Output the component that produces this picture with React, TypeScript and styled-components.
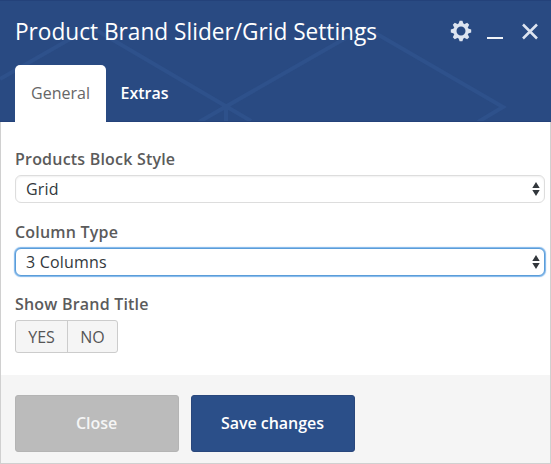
import React from "react";
import styled, { createGlobalStyle } from "styled-components";

const GlobalStyle = createGlobalStyle`
  * { box-sizing: border-box; }
  body { margin: 0; font-family: "Open Sans", sans-serif; }
  button { font-family: inherit; margin: 0; padding: 0; }
`;

const Panel = styled.section`
  width: 551px;
  height: 464px;
  display: flex;
  flex-direction: column;
  border: 1px solid #d0d0d0;
  border-top: 0;
  background: #fff;
`;

const Header = styled.header`
  position: relative;
  height: 122px;
  margin: 0 -1px;
  padding: 0 10px 0 15px;
  display: flex;
  flex-direction: column;
  justify-content: space-between;
  background: #294a82;
  border: solid #24427a;
  border-width: 1px 0 1px;
`;

const Pattern = styled.svg`
  position: absolute;
  left: 0;
  top: -1px;
`;

const TitleRow = styled.div`
  position: relative;
  height: 60px;
  display: flex;
  align-items: center;
  justify-content: space-between;
`;

const Title = styled.h1`
  margin: 0;
  font-size: 24px;
  line-height: 32px;
  font-weight: 400;
  transform: scaleX(0.943);
  transform-origin: left center;
  white-space: nowrap;
  color: #fff;
`;

const Controls = styled.div`
  display: flex;
  align-items: center;
  gap: 13px;
`;

const IconButton = styled.button`
  display: flex;
  border: 0;
  background: none;
`;

const Tabs = styled.nav`
  position: relative;
  display: flex;
  margin-bottom: -1px;
`;

const Tab = styled.button<{ $active?: boolean }>`
  height: 57px;
  width: ${(p) => (p.$active ? 91 : 77)}px;
  padding-bottom: 1px;
  border: 0;
  border-radius: 5px 5px 0 0;
  background: ${(p) => (p.$active ? "#fff" : "transparent")};
  color: ${(p) => (p.$active ? "#666" : "#fff")};
  font-size: 16px;
  line-height: 22px;
  font-weight: ${(p) => (p.$active ? 400 : 600)};
`;

const Body = styled.main`
  height: 253px;
  padding: 26px 4px 0 14px;
`;

const Field = styled.div`
  height: 72.5px;
`;

const Label = styled.div`
  height: 27px;
  font-size: 16px;
  line-height: 22px;
  font-weight: 600;
  letter-spacing: 0.2px;
  color: #5b5b5b;
`;

const Select = styled.button<{ $focused?: boolean }>`
  width: 530px;
  height: 28px;
  padding: 0 4px 0 10px;
  display: flex;
  align-items: center;
  justify-content: space-between;
  border: 1px solid ${(p) => (p.$focused ? "#5b9dd9" : "#ddd")};
  border-radius: 6px;
  background: #fff;
  box-shadow: ${(p) =>
    p.$focused ? "0 0 1px 0.5px rgba(70,150,225,.7)" : "inset 0 1px 2px rgba(0,0,0,.06)"};
  color: #32373c;
  font-size: 16px;
  line-height: 22px;
  letter-spacing: 0.2px;
`;

const Toggle = styled.div`
  width: 103px;
  height: 33px;
  display: flex;
  border: 1px solid #ccc;
  border-radius: 3px;
  background: #f5f5f5;
`;

const ToggleOption = styled.button<{ $width: number }>`
  width: ${(p) => p.$width}px;
  border: 0;
  background: none;
  color: #555;
  font-size: 16px;
  line-height: 22px;
  & + & { border-left: 1px solid #ccc; }
`;

const Footer = styled.footer`
  flex: 1;
  display: flex;
  gap: 12px;
  padding: 20px 14px 0;
  background: #f5f5f5;
`;

const ActionButton = styled.button<{ $primary?: boolean }>`
  width: 164px;
  height: 57px;
  padding: 0 1px 2px 0;
  border: 1px solid ${(p) => (p.$primary ? "#29477c" : "#b4b4b4")};
  border-radius: 3px;
  background: ${(p) => (p.$primary ? "#2b4f89" : "#bbb")};
  color: ${(p) => (p.$primary ? "#fff" : "#f5f5f5")};
  font-size: 16px;
  line-height: 22px;
  font-weight: 600;
  letter-spacing: -0.05px;
`;

const Arrows = () => (
  <svg width="8" height="16" viewBox="0 0 8 16" fill="#32373c">
    <path d="M4 1 7.7 7H.3ZM4 15 .3 9h7.4Z" />
  </svg>
);

const teeth = [0, 45, 90, 135, 180, 225, 270, 315];

const Gear = () => (
  <svg width="22" height="22" viewBox="-11 -11 22 22">
    <circle r="6.1" fill="none" stroke="#dde4f0" strokeWidth="3.2" />
    {teeth.map((angle) => (
      <path key={angle} d="M-2.5-7-1.4-10.2h2.8L2.5-7Z" fill="#dde4f0" transform={`rotate(${angle})`} />
    ))}
  </svg>
);

export default function App() {
  return (
    <>
      <GlobalStyle />
      <Panel>
        <Header>
          <Pattern width="551" height="121" fill="none" stroke="#2e518b" strokeWidth="4">
            <path d="M0 79 91 27 251 121M199 122 365 27 503 107 478 122M226 107V121" />
          </Pattern>
          <TitleRow>
            <Title>Product Brand Slider/Grid Settings</Title>
            <Controls>
              <IconButton aria-label="Settings"><Gear /></IconButton>
              <IconButton aria-label="Minimize">
                <svg width="21" height="22" stroke="#f1f4f8" strokeWidth="2"><path d="M2 18h16" /></svg>
              </IconButton>
              <IconButton aria-label="Close panel">
                <svg width="22" height="22" fill="none" stroke="#dde4f0" strokeWidth="2.5"><path d="m4 4.5 14 14M18 4.5 4 18.5" /></svg>
              </IconButton>
            </Controls>
          </TitleRow>
          <Tabs>
            <Tab $active>General</Tab>
            <Tab>Extras</Tab>
          </Tabs>
        </Header>
        <Body>
          <Field>
            <Label>Products Block Style</Label>
            <Select>Grid<Arrows /></Select>
          </Field>
          <Field>
            <Label>Column Type</Label>
            <Select $focused>3 Columns<Arrows /></Select>
          </Field>
          <Field>
            <Label>Show Brand Title</Label>
            <Toggle>
              <ToggleOption $width={51}>YES</ToggleOption>
              <ToggleOption $width={50}>NO</ToggleOption>
            </Toggle>
          </Field>
        </Body>
        <Footer>
          <ActionButton>Close</ActionButton>
          <ActionButton $primary>Save changes</ActionButton>
        </Footer>
      </Panel>
    </>
  );
}
